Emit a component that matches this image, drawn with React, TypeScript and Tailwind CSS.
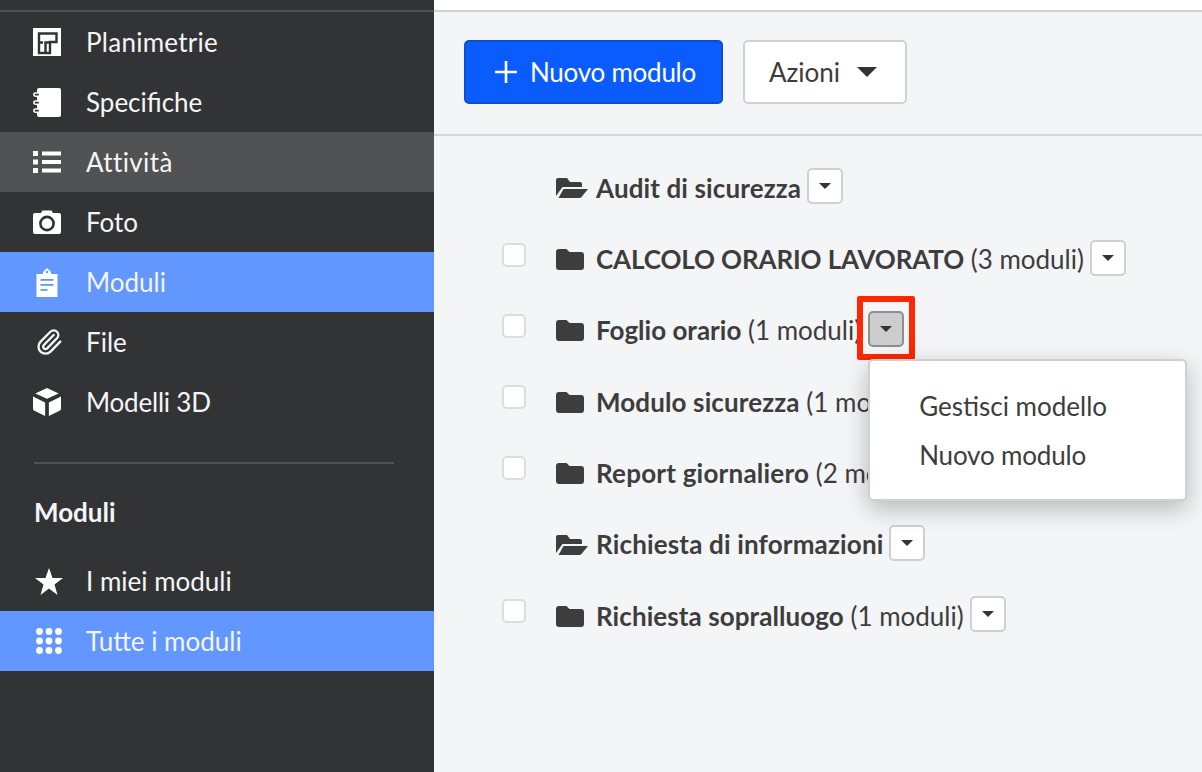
import type { ReactNode } from 'react';
import { Paperclip } from 'lucide-react';

function PlanIcon() {
  return (
    <svg width="28" height="28" viewBox="0 0 28 28" fill="none">
      <rect width="28" height="28" fill="#fff" />
      <path d="M6 25V5.5H23.5V14H17V25Z" stroke="#323335" strokeWidth="2.4" />
      <path d="M6 14.5H10M17 14.5H12.5V25" stroke="#323335" strokeWidth="2.4" />
    </svg>
  );
}

function NotebookIcon() {
  return (
    <svg width="28" height="29" viewBox="0 0 28 29" fill="none">
      <path d="M4 2a2 2 0 0 1 2-2h20a2 2 0 0 1 2 2v25a2 2 0 0 1-2 2H6a2 2 0 0 1-2-2Z" fill="#fff" />
      <g stroke="#fff" strokeWidth="1.6" fill="#323335">
        <rect x="0.8" y="5" width="6" height="3.2" rx="1.6" />
        <rect x="0.8" y="13" width="6" height="3.2" rx="1.6" />
        <rect x="0.8" y="21" width="6" height="3.2" rx="1.6" />
      </g>
    </svg>
  );
}

function ListIcon() {
  return (
    <svg width="28" height="22" viewBox="0 0 28 22" fill="#fff">
      <rect x="0" y="0" width="5" height="5" />
      <rect x="0" y="8.5" width="5" height="5" />
      <rect x="0" y="17" width="5" height="5" />
      <rect x="9" y="0.5" width="19" height="4" />
      <rect x="9" y="9" width="19" height="4" />
      <rect x="9" y="17.5" width="19" height="4" />
    </svg>
  );
}

function CameraIcon() {
  return (
    <svg width="28" height="24" viewBox="0 0 28 24">
      <path
        d="M2 3H8L9.5 0.5H18.5L20 3H26a2 2 0 0 1 2 2V22a2 2 0 0 1-2 2H2a2 2 0 0 1-2-2V5a2 2 0 0 1 2-2Z"
        fill="#fff"
      />
      <circle cx="14" cy="13.5" r="6.6" fill="none" stroke="#323335" strokeWidth="2.6" />
    </svg>
  );
}

function ClipboardIcon() {
  return (
    <svg width="22" height="29" viewBox="0 0 22 29">
      <path d="M11 0 15 4V6H21.5V29H0.5V6H7V4Z" fill="#fff" />
      <circle cx="11" cy="4" r="1.2" fill="#6197ff" />
      <g fill="#6197ff">
        <rect x="4.5" y="11" width="13" height="1.8" />
        <rect x="4.5" y="16" width="13" height="1.8" />
        <rect x="4.5" y="21" width="7" height="1.8" />
      </g>
    </svg>
  );
}

function CubeIcon() {
  return (
    <svg width="30" height="30" viewBox="0 0 30 30" fill="#fff">
      <path d="M15 0 27.5 6 15 11.5 2.5 6Z" />
      <path d="M0 9 13 15.5V30L1 24Q0 23.5 0 22Z" />
      <path d="M30 9 17 15.5V30L29 24Q30 23.5 30 22Z" />
    </svg>
  );
}

function StarIcon() {
  return (
    <svg width="28" height="27" viewBox="0 0 28 27" fill="#fff" className="translate-x-[2px]">
      <polygon points="14,0 17.5,10 28,10 19.5,16.5 22.5,27 14,20.5 5.5,27 8.5,16.5 0,10 10.5,10" />
    </svg>
  );
}

function DotsIcon() {
  return (
    <svg width="26" height="26" viewBox="0 0 26 26" fill="#fff" className="translate-x-[2px]">
      {[3.5, 13, 22.5].map((y) =>
        [3.5, 13, 22.5].map((x) => <circle key={`${x}-${y}`} cx={x} cy={y} r="3.4" />),
      )}
    </svg>
  );
}

function FolderIcon() {
  return (
    <svg width="28" height="21" viewBox="0 0 28 21" fill="#3d3d3d">
      <path d="M3 0H10.5L13.5 3H25a3 3 0 0 1 3 3V18a3 3 0 0 1-3 3H3a3 3 0 0 1-3-3V3a3 3 0 0 1 3-3Z" />
    </svg>
  );
}

function FolderOpenIcon() {
  return (
    <svg width="32" height="20" viewBox="0 0 32 20" fill="#3d3d3d">
      <path d="M0 2Q0 0 2 0H11L14 4H24Q26 4 26 6V9H6.5L0 18Z" />
      <path d="M7.5 11H32L25.5 19Q24.5 20 23 20H2.5Z" />
    </svg>
  );
}

function NavItem({
  icon,
  label,
  variant,
  labelClass = '',
}: {
  icon: ReactNode;
  label: string;
  variant?: 'active' | 'hover';
  labelClass?: string;
}) {
  const bg = variant === 'active' ? 'bg-[#6197ff]' : variant === 'hover' ? 'bg-[#515254]' : '';
  return (
    <div className={`flex h-[60px] items-center text-[#f4f5f7] ${bg}`}>
      <div className="flex w-[86px] justify-center">
        <div className="flex w-[28px] translate-x-[4px] items-center justify-center">{icon}</div>
      </div>
      <span className={labelClass}>{label}</span>
    </div>
  );
}

function Caret({ big }: { big?: boolean }) {
  return big ? (
    <span className="h-0 w-0 border-x-[10px] border-t-[10px] border-x-transparent border-t-[#323335]" />
  ) : (
    <span className="h-0 w-0 border-x-[6px] border-t-[6px] border-x-transparent border-t-[#323335]" />
  );
}

const rows = [
  { name: 'Audit di sicurezza', open: true, tracking: 'tracking-[0.12px]' },
  { name: 'CALCOLO ORARIO LAVORATO', count: '(3 moduli)', tracking: 'tracking-[-0.13px]' },
  { name: 'Foglio orario', count: '(1 moduli)', tracking: '' },
  { name: 'Modulo sicurezza', count: '(1 moduli)', tracking: 'tracking-[0.12px]' },
  { name: 'Report giornaliero', count: '(2 moduli)', tracking: 'tracking-[0.22px]' },
  { name: 'Richiesta di informazioni', open: true, tracking: 'tracking-[0.16px]' },
  { name: 'Richiesta sopralluogo', count: '(1 moduli)', tracking: 'tracking-[0.08px]' },
];

function FolderRow({ row, active }: { row: (typeof rows)[number]; active?: boolean }) {
  return (
    <div className={`relative flex h-[71.3px] items-center pl-[68px] ${active ? 'z-10' : ''}`}>
      <div className="w-[24px]">
        {!row.open && <div className="h-[24px] w-[24px] -translate-y-[5px] rounded-[5px] border-2 border-[#dcdde0] bg-white" />}
      </div>
      <div className="ml-[30px] flex w-[40px] shrink-0 items-center">{row.open ? <FolderOpenIcon /> : <FolderIcon />}</div>
      <span className="whitespace-nowrap text-[#3d3d3d]">
        <span className={`font-bold ${row.tracking}`}>{row.name}</span>
        {row.count && <span> {row.count}</span>}
      </span>
      <div className={`relative shrink-0 -translate-y-[2px] ${active ? 'ml-[7px]' : 'ml-[6px]'}`}>
        <button
          className={`flex h-[36px] w-[36px] items-center justify-center rounded-[5px] border-2 ${
            active ? 'border-[#8f8f8f] bg-[#cdcdcd]' : 'border-[#cfd0d3] bg-white'
          }`}
        >
          <Caret />
        </button>
        {active && (
          <>
            <div className="absolute -left-[11px] -top-[15px] h-[64px] w-[58px] rounded-[2px] border-[6px] border-[#ff2600]" />
            <div className="absolute left-0 top-[48px] z-10 w-[319px] rounded-[5px] border-2 border-[#cfd0d3] bg-white pb-[19px] pl-[49px] pt-[21px] text-[#3d3d3d] shadow-[0_8px_24px_rgba(0,0,0,0.25)]">
              <div className="flex h-[49px] items-center">Gestisci modello</div>
              <div className="flex h-[49px] items-center tracking-[-0.18px]">Nuovo modulo</div>
            </div>
          </>
        )}
      </div>
    </div>
  );
}

export default function App() {
  return (
    <div className="flex h-[772px] w-[1202px] overflow-hidden font-['Lato','Inter',sans-serif] text-[26px]">
      {/* Sidebar */}
      <aside className="h-full w-[434px] shrink-0 bg-[#323335]">
        <div className="mt-[10px] h-[2px] bg-[#515254]" />
        <NavItem icon={<PlanIcon />} label="Planimetrie" labelClass="tracking-[0.27px]" />
        <NavItem icon={<NotebookIcon />} label="Specifiche" />
        <NavItem icon={<ListIcon />} label="Attività" labelClass="tracking-[0.4px] [font-variant-ligatures:none]" variant="hover" />
        <NavItem icon={<CameraIcon />} label="Foto" />
        <NavItem icon={<ClipboardIcon />} label="Moduli" variant="active" />
        <NavItem icon={<Paperclip size={30} strokeWidth={2} className="translate-x-[2px]" />} label="File" />
        <NavItem icon={<CubeIcon />} label="Modelli 3D" labelClass="tracking-[-0.2px]" />
        <div className="ml-[34px] mr-[40px] mt-[30px] h-[2px] bg-[#515254]" />
        <div className="flex h-[87px] items-center px-[34px] pt-[9px] font-bold text-[#f4f5f7]">Moduli</div>
        <NavItem icon={<StarIcon />} label="I miei moduli" />
        <NavItem icon={<DotsIcon />} label="Tutte i moduli" variant="active" />
      </aside>

      {/* Main */}
      <main className="h-full min-w-0 flex-1 bg-[#f4f5f7]">
        <div className="h-[12px] border-b-2 border-[#d0d1d4] bg-white" />
        <div className="flex h-[124px] items-center gap-[20px] border-b-2 border-[#d5d6d9] pb-[2px] pl-[30px]">
          <button className="flex h-[64px] w-[259px] items-center gap-[12px] rounded-[5px] border-2 border-[#0a4fd0] bg-[#0a5cff] pl-[28px] tracking-[-0.25px] text-white">
            <svg width="24" height="24" viewBox="0 0 24 24" stroke="#fff" strokeWidth="2.6">
              <path d="M12 1V23M1 12H23" />
            </svg>
            Nuovo modulo
          </button>
          <button className="flex h-[64px] w-[164px] items-center gap-[17px] rounded-[5px] border-2 border-[#d0d1d4] bg-white pl-[24px] text-[#3d3d3d]">
            Azioni
            <Caret big />
          </button>
        </div>
        <div className="pt-[16.6px]">
          {rows.map((row, i) => (
            <FolderRow key={row.name} row={row} active={i === 2} />
          ))}
        </div>
      </main>
    </div>
  );
}
